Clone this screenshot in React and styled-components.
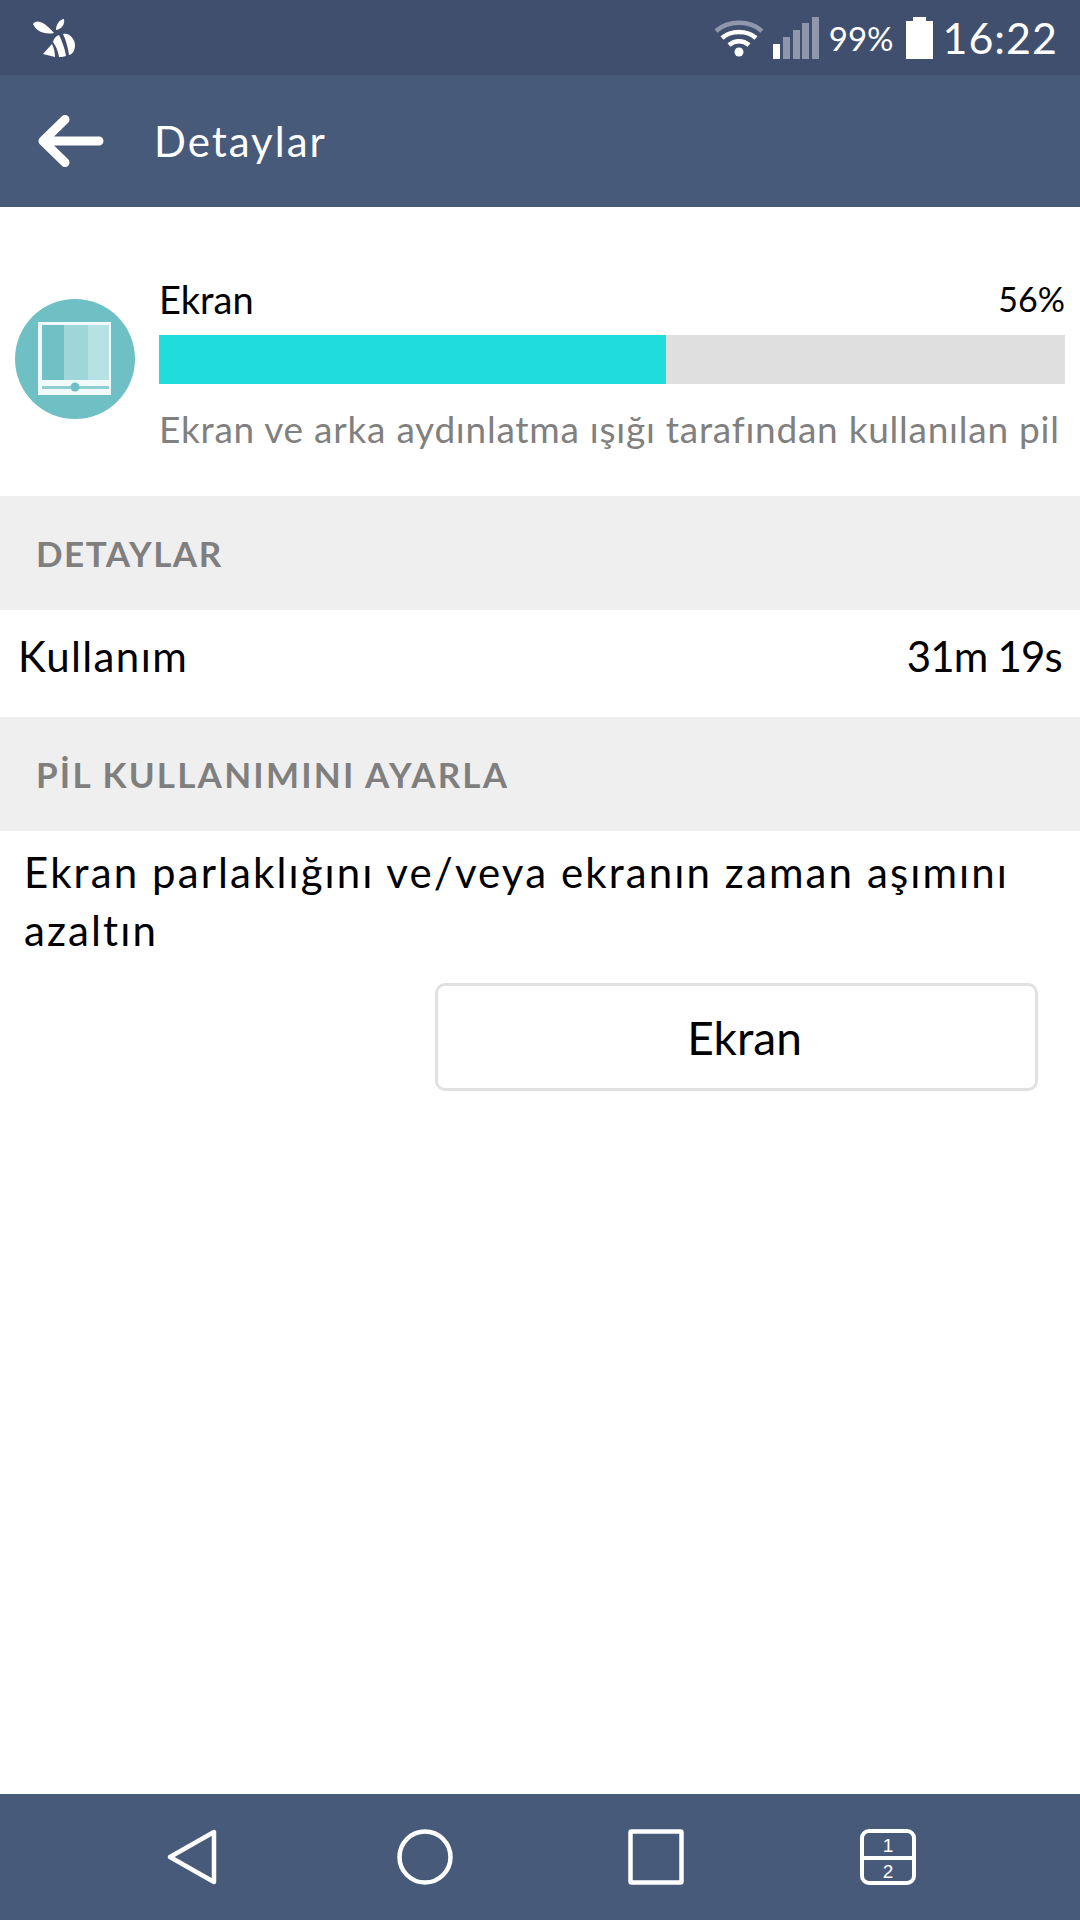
import React from 'react';
import styled, {createGlobalStyle} from 'styled-components';

const Global = createGlobalStyle`
  html, body {
    margin: 0;
    padding: 0;
    background: #fff;
  }
  body {
    font-family: "Lato", "Noto Sans", sans-serif;
    color: #000;
  }
`;

const Page = styled.div`
  width: 1080px;
  height: 1920px;
  display: flex;
  flex-direction: column;
  overflow: hidden;
  background: #fff;
`;

const StatusBar = styled.div`
  height: 75px;
  flex: none;
  display: flex;
  align-items: center;
  justify-content: space-between;
  padding: 0 22px 0 32px;
  background: #414f6e;
  color: #fff;
`;

const StatusRight = styled.div`
  display: flex;
  align-items: center;
`;

const Percent = styled.span`
  font-size: 33px;
  margin: 0 13px 0 10px;
`;

const Clock = styled.span`
  font-size: 43px;
  letter-spacing: 1px;
  margin-left: 9px;
`;

const AppBar = styled.div`
  height: 132px;
  flex: none;
  display: flex;
  align-items: center;
  padding-left: 38px;
  background: #475a7a;
  color: #fff;
`;

const Title = styled.span`
  font-size: 42px;
  letter-spacing: 2px;
  margin-left: 50px;
`;

const Usage = styled.div`
  height: 289px;
  flex: none;
  display: flex;
  align-items: flex-start;
  padding: 72px 15px 0;
  box-sizing: border-box;
`;

const UsageIcon = styled.div`
  display: flex;
  margin-top: 20px;
`;

const UsageBody = styled.div`
  flex: 1;
  min-width: 0;
  margin-left: 24px;
  display: flex;
  flex-direction: column;
`;

const UsageHead = styled.div`
  display: flex;
  justify-content: space-between;
  align-items: center;
  font-size: 38px;
  line-height: 40px;
  margin-bottom: 16px;
`;

const UsagePercent = styled.span`
  font-size: 34px;
`;

const Track = styled.div`
  height: 49px;
  background: #dfdfdf;
`;

const Fill = styled.div`
  height: 100%;
  background: #1edddb;
`;

const Hint = styled.div`
  font-size: 37px;
  line-height: 44px;
  margin-top: 23px;
  color: #808080;
  letter-spacing: 0.75px;
  white-space: nowrap;
`;

const SectionHead = styled.div`
  height: 114px;
  flex: none;
  display: flex;
  align-items: center;
  padding-left: 36px;
  background: #efefef;
  color: #7f7f7f;
  font-size: 35px;
  font-weight: 700;
  letter-spacing: ${p => p.$tracking}px;
`;

const Row = styled.div`
  height: 107px;
  flex: none;
  box-sizing: border-box;
  display: flex;
  align-items: center;
  justify-content: space-between;
  padding: 0 18px 15px;
  font-size: 42px;
`;

const RowLabel = styled.span`
  letter-spacing: 1.4px;
`;

const RowValue = styled.span`
  letter-spacing: -0.8px;
`;

const Tip = styled.div`
  padding: 12px 24px 0;
  font-size: 42px;
  line-height: 58px;
  letter-spacing: 2.1px;
`;

const ButtonRow = styled.div`
  display: flex;
  justify-content: flex-end;
  padding: 24px 42px 0 0;
`;

const Button = styled.button`
  width: 603px;
  height: 108px;
  background: #fff;
  border: 3px solid #e0e2e2;
  border-radius: 10px;
  font: inherit;
  font-size: 46px;
  color: #000;
  padding: 0 0 0 16px;
`;

const Spacer = styled.div`
  flex: 1;
`;

const NavBar = styled.div`
  height: 126px;
  flex: none;
  box-sizing: border-box;
  display: flex;
  align-items: center;
  justify-content: space-between;
  padding: 0 164px 0 167px;
  background: #475a7a;
`;

const Bee = () => (
  <svg width="44" height="40" viewBox="0 0 44 40" fill="#fff">
    <path d="M1 6 C4 1 12 3 22 15 C12 17 4 13 1 6Z" />
    <path d="M24 12 C24 6 28 1 32 1 C33 6 30 11 24 12Z" />
    <path d="M31 16 C37 14 43 21 43 27 C43 32 41 36 37 37 C36 30 34 22 31 16Z" />
    <path d="M21 24 C22 20 24 18 27 17 C30 23 33 31 34 38 C31 39 29 39 27 39 C26 33 24 28 21 24Z" />
    <path d="M11 36 L20 26 C22 30 23 35 23 39 C19 38 15 37 11 36Z" />
  </svg>
);

const Wifi = () => (
  <svg width="50" height="38" viewBox="0 0 50 38" fill="none">
    <path d="M2 12 C14 1 36 1 48 12" stroke="#8e97ab" strokeWidth="4.5" />
    <path d="M8 19 C17 11 33 11 42 19" stroke="#fff" strokeWidth="4.5" />
    <path d="M15 26 C21 21 29 21 35 26" stroke="#fff" strokeWidth="4.5" />
    <circle cx="25" cy="33" r="4.5" fill="#fff" />
  </svg>
);

const Signal = () => (
  <svg width="46" height="42" viewBox="0 0 46 42" style={{marginLeft: 9}}>
    <rect x="0" y="27" width="7" height="15" fill="#fff" />
    <rect x="10" y="20" width="7" height="22" fill="#8e97ab" />
    <rect x="20" y="13" width="7" height="29" fill="#8e97ab" />
    <rect x="29" y="6" width="7" height="36" fill="#8e97ab" />
    <rect x="39" y="0" width="7" height="42" fill="#8e97ab" />
  </svg>
);

const Battery = () => (
  <svg width="27" height="42" viewBox="0 0 27 42" fill="#fff">
    <rect x="7" y="0" width="13" height="5" />
    <rect x="0" y="4" width="27" height="38" />
  </svg>
);

const BackArrow = () => (
  <svg width="66" height="52" viewBox="0 0 66 52" fill="none" stroke="#fff" strokeWidth="9" strokeLinecap="round" strokeLinejoin="round">
    <path d="M61 26 H5 M27 4.5 L5 26 L27 47.5" />
  </svg>
);

const ScreenIcon = () => (
  <svg width="120" height="120" viewBox="0 0 120 120">
    <circle cx="60" cy="60" r="60" fill="#6ec0c5" />
    <rect x="23" y="23" width="73" height="73" fill="#f1f9fa" />
    <rect x="27" y="26" width="22" height="55" fill="#70c1c6" />
    <rect x="49" y="26" width="24" height="55" fill="#9ed6da" />
    <rect x="73" y="26" width="21" height="55" fill="#b6e1e5" />
    <rect x="27" y="87" width="67" height="3" fill="#8fcfd3" />
    <circle cx="60" cy="88" r="4.5" fill="#6ec0c5" />
  </svg>
);

const NavBack = () => (
  <svg width="54" height="56" viewBox="0 0 54 56" fill="none" stroke="#fff" strokeWidth="4.5" strokeLinejoin="round">
    <path d="M47 3 V53 L3 28 Z" />
  </svg>
);

const NavHome = () => (
  <svg width="56" height="56" viewBox="0 0 56 56" fill="none" stroke="#fff" strokeWidth="4.5">
    <circle cx="28" cy="28" r="25.5" />
  </svg>
);

const NavRecent = () => (
  <svg width="56" height="56" viewBox="0 0 56 56" fill="none" stroke="#fff" strokeWidth="4.5">
    <rect x="2.5" y="2.5" width="51" height="51" rx="1" />
  </svg>
);

const NavSplit = () => (
  <svg width="56" height="56" viewBox="0 0 56 56" fill="none" stroke="#fff">
    <rect x="2" y="2" width="52" height="52" rx="7" strokeWidth="4" />
    <path d="M2 29 H54" strokeWidth="4" />
    <text x="28" y="23" textAnchor="middle" fill="#fff" stroke="none" fontSize="19" fontFamily="Liberation Sans">1</text>
    <text x="28" y="49" textAnchor="middle" fill="#fff" stroke="none" fontSize="19" fontFamily="Liberation Sans">2</text>
  </svg>
);

const App = function () {
  const percent = 56;

  return (
    <Page>
      <Global />
      <StatusBar>
        <Bee />
        <StatusRight>
          <Wifi />
          <Signal />
          <Percent>99%</Percent>
          <Battery />
          <Clock>16:22</Clock>
        </StatusRight>
      </StatusBar>
      <AppBar>
        <BackArrow />
        <Title>Detaylar</Title>
      </AppBar>
      <Usage>
        <UsageIcon>
          <ScreenIcon />
        </UsageIcon>
        <UsageBody>
          <UsageHead>
            <span>Ekran</span>
            <UsagePercent>{percent}%</UsagePercent>
          </UsageHead>
          <Track>
            <Fill style={{width: `${percent}%`}} />
          </Track>
          <Hint>Ekran ve arka aydınlatma ışığı tarafından kullanılan pil</Hint>
        </UsageBody>
      </Usage>
      <SectionHead $tracking={1.5}>DETAYLAR</SectionHead>
      <Row>
        <RowLabel>Kullanım</RowLabel>
        <RowValue>31m 19s</RowValue>
      </Row>
      <SectionHead $tracking={2.2}>PİL KULLANIMINI AYARLA</SectionHead>
      <Tip>Ekran parlaklığını ve/veya ekranın zaman aşımını azaltın</Tip>
      <ButtonRow>
        <Button>Ekran</Button>
      </ButtonRow>
      <Spacer />
      <NavBar>
        <NavBack />
        <NavHome />
        <NavRecent />
        <NavSplit />
      </NavBar>
    </Page>
  );
};

export default App;
